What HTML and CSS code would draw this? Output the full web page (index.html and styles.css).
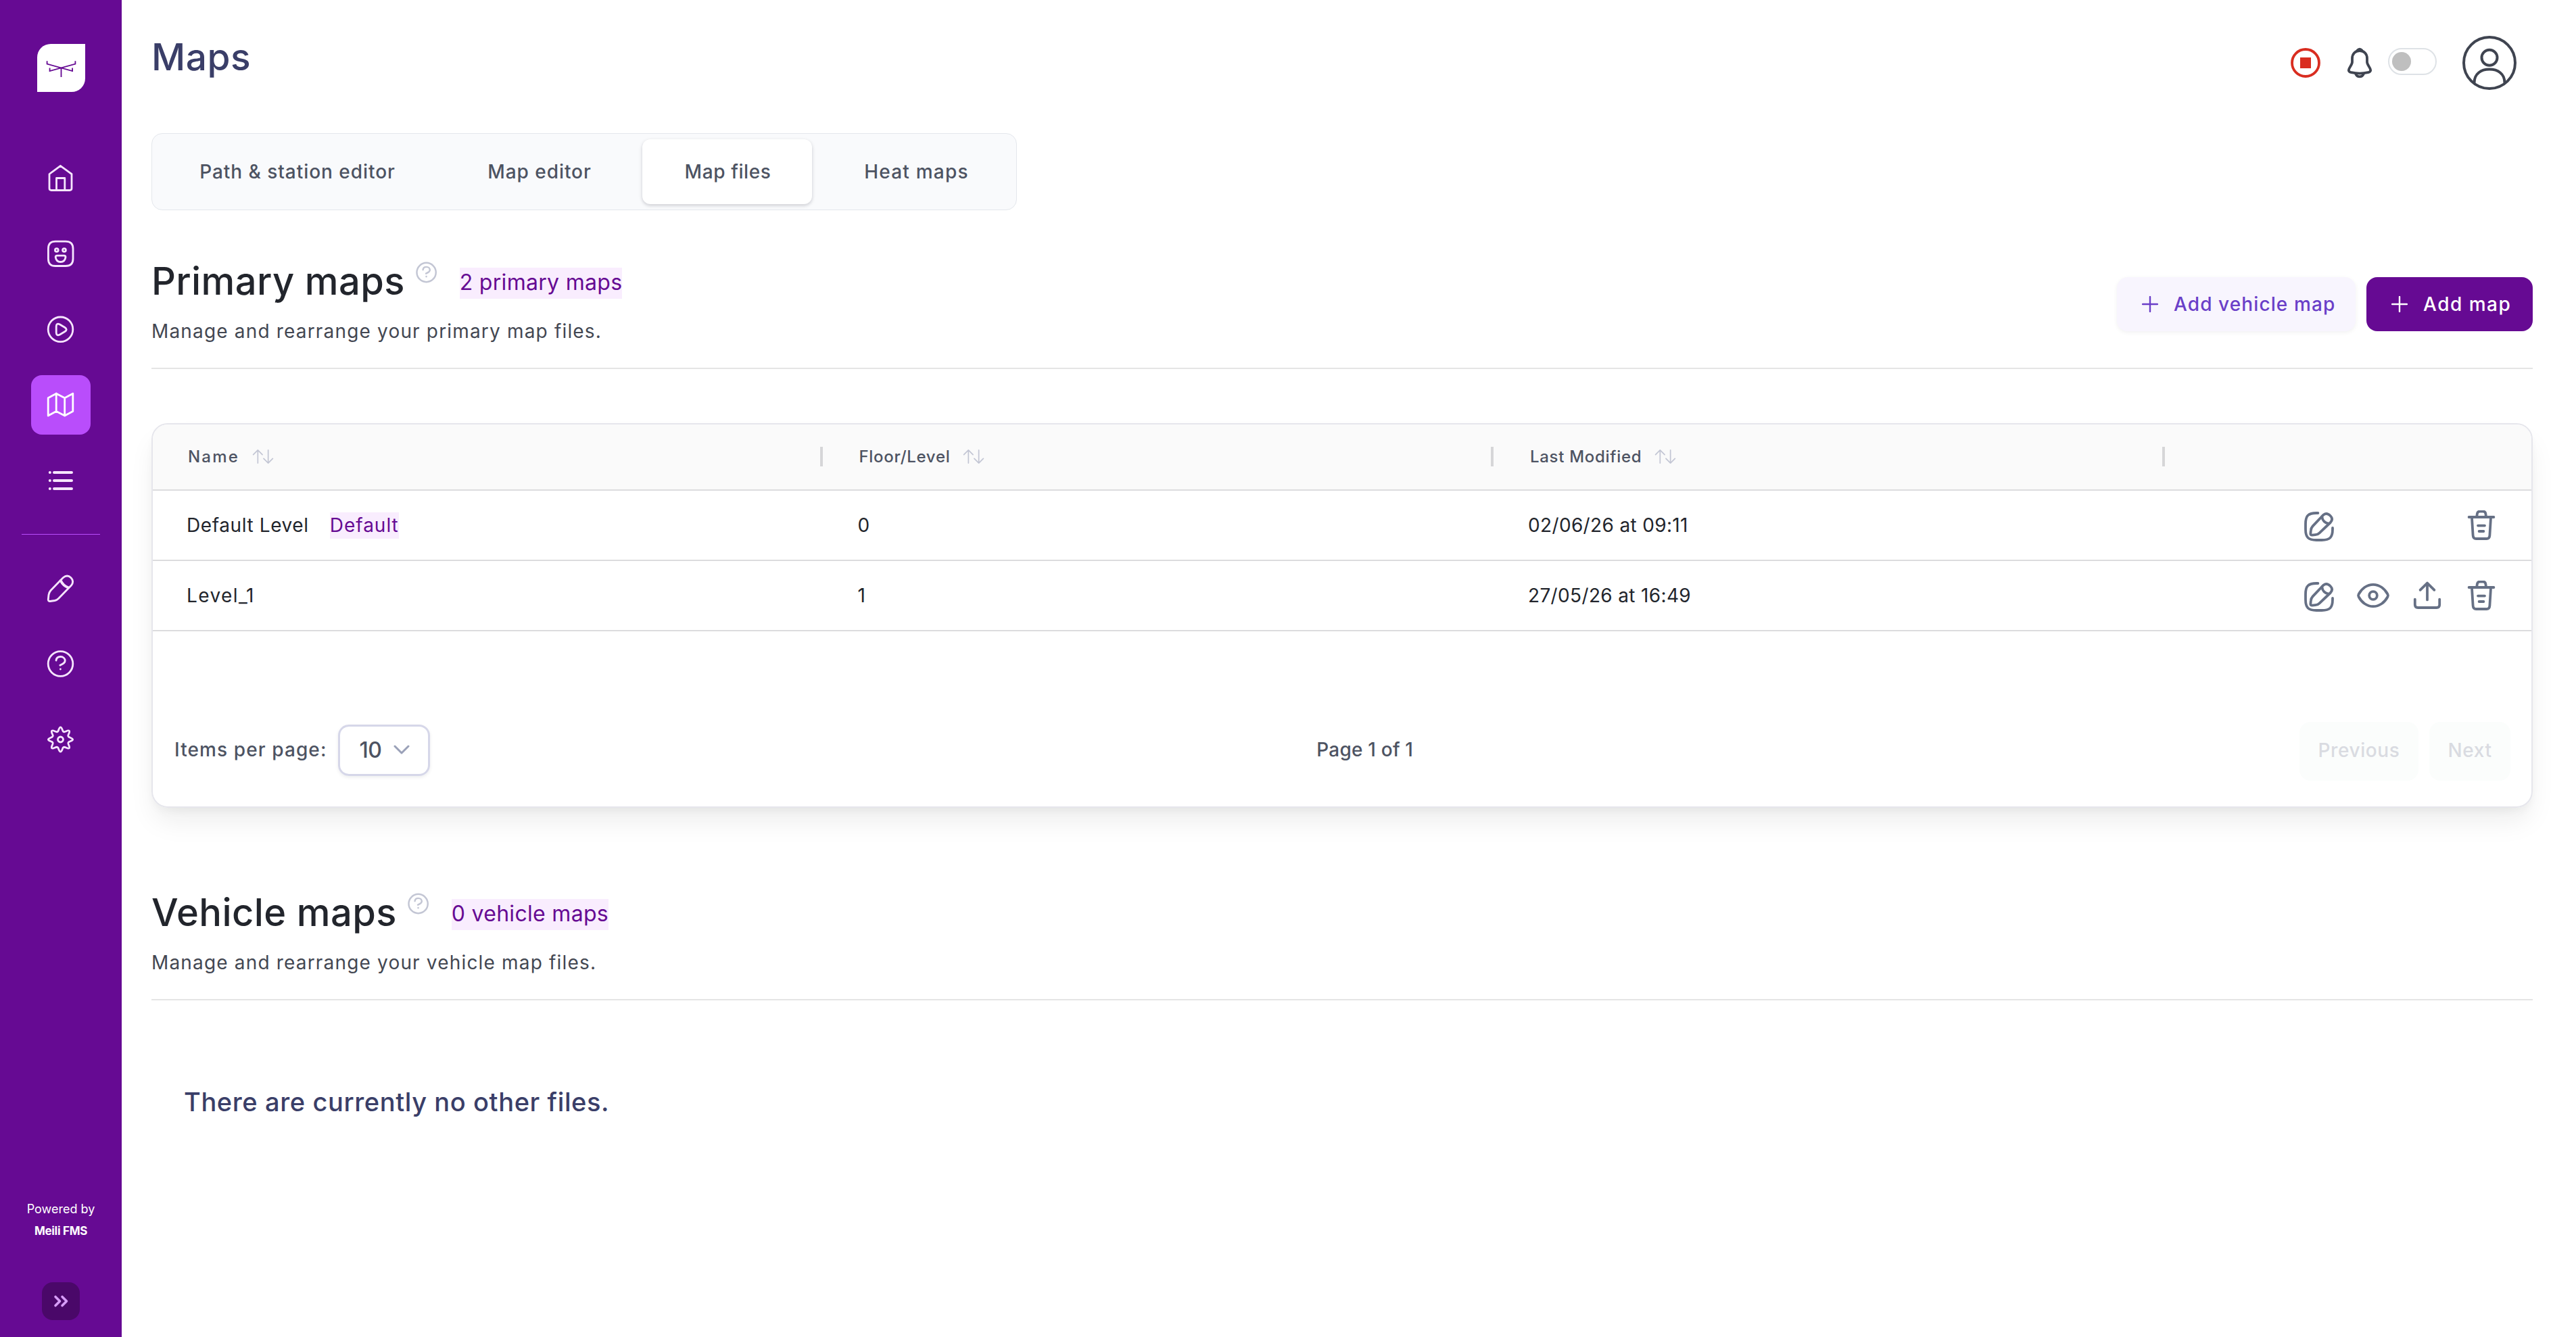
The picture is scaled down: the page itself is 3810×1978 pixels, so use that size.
FILE: index.html
```html
<!DOCTYPE html>
<html lang="en">
<head>
    <meta charset="UTF-8">
    <meta name="viewport" content="width=device-width, initial-scale=1.0">
    <title>Maps</title>
    <link rel="stylesheet" href="styles.css">
</head>
<body>

    <!-- shared icons -->
    <svg class="sprite">
        <symbol id="icon-edit" viewBox="0 0 24 24">
            <path d="M11.2 2H10C4 2 2 4 2 10v4c0 6 2 8 8 8h4c6 0 8-2 8-8v-1"/>
            <path d="M14 4.6L7.3 11.7C6.3 12.8 6 13.6 5.9 15L5.7 17.1C5.6 18 6 18.3 6.9 18.3L9.2 18.1C10.6 18 11.3 17.7 12.2 16.8L20.4 9C22 7.3 21.9 5.6 20.3 4C18.6 2.3 16.9 2 15.4 3.2Z"/>
            <path d="M14.2 4.8C14.4 7.4 16.4 9.5 19 9.8"/>
        </symbol>
        <symbol id="icon-trash" viewBox="0 0 24 24">
            <path d="M2.8 5H21.2M8.6 4.8L8.9 2.6C9.1 1.3 9.7 .8 10.8 .8H13.4C14.6 .8 15 1.3 15.2 2.6L15.5 4.8"/>
            <path d="M5 5.4L5.8 18.4C5.9 20.3 6.6 21 8.2 21H15.8C17.4 21 18.1 20.3 18.2 18.4L19 5.4M9.5 11.3H14.5M10.3 15.5H13.7"/>
        </symbol>
        <symbol id="icon-help" viewBox="0 0 44 44">
            <circle cx="21.5" cy="22" r="18.3"/>
            <path d="M15 17C15.4 13.4 18 11.5 21.5 11.5C25.4 11.5 28.2 14 28.2 17.4C28.2 20.8 25 22 20.8 24.2M21.4 29.9V30"/>
        </symbol>
        <symbol id="icon-sort" viewBox="0 0 32 24">
            <path d="M8 22V2M1 9L8 2L15 9M24 2V22M17 15L24 22L31 15"/>
        </symbol>
        <symbol id="icon-plus" viewBox="0 0 24 24">
            <path d="M12 1V23M1 12H23"/>
        </symbol>
    </svg>

    <div class="layout">
        <aside class="sidebar">
            <div class="logo">
                <svg viewBox="43 46 214 214"><path d="M87 122V135L200 167V153M213 122V135L99 167V153M150 152V194"/></svg>
            </div>

            <nav class="nav">
                <a class="nav-item"><svg viewBox="0 0 44 44"><path d="M5 16.5L21.4 4.3L38 16.5V37.5Q38 40.5 35 40.5H8Q5 40.5 5 37.5ZM15.5 40V22.5H27.8V40"/></svg></a>
                <a class="nav-item"><svg viewBox="0 0 44 44"><path d="M14 4.2H29Q40 4.2 40 15V30Q40 40.5 29 40.5H14Q3.4 40.5 3.4 30V15Q3.4 4.2 14 4.2ZM14.2 27.5Q14.2 25.2 16.5 25.2H26.8Q29 25.2 29 27.5Q28 34.5 21.6 34.5Q15.2 34.5 14.2 27.5Z"/><circle cx="15.8" cy="17" r="2.4"/><circle cx="27" cy="17" r="2.4"/></svg></a>
                <a class="nav-item"><svg viewBox="0 0 44 44"><circle cx="21.5" cy="22.3" r="18.3"/><path d="M15.2 18Q15.2 12.5 20.5 15L28 19.5Q32.5 22.5 28 25.5L20.5 30Q15.2 32.5 15.2 27Z"/></svg></a>
                <a class="nav-item active"><svg viewBox="0 0 44 44"><path d="M3.2 11.7L15.2 5.2L27.7 11.7L39.8 5.2V31.5L27.7 38L15.2 31.5L3.2 38ZM15.2 5.2V31.5M27.7 11.7V38"/></svg></a>
                <a class="nav-item"><svg class="thick" viewBox="0 0 44 44"><path d="M5.8 10H5.9M5.8 22H5.9M5.8 34H5.9M12 10H38M12 22H38M12 34H38"/></svg></a>
                <hr class="nav-divider">
                <a class="nav-item"><svg viewBox="0 0 44 44"><path d="M21.5 10.5L7 25.5Q4.5 28.5 4 32L3.3 38.5Q3 41.5 6 41.5L13 40.5Q16 40 18.5 37.5L34 21.5L37.5 18Q42 12 37 6.8Q31.5 1.5 25.5 6.5Z"/><path class="band" d="M21.8 11Q25.5 18.8 33 21.3"/></svg></a>
                <a class="nav-item"><svg><use href="#icon-help"/></svg></a>
                <a class="nav-item"><svg viewBox="-21.5 -22 44 44"><circle r="4"/><path d="M14.2-2.8Q22 0 14.2 2.8Q9.7 4 12.1 8.1Q15.6 15.6 8.1 12.1Q4 9.7 2.8 14.2Q0 22-2.8 14.2Q-4 9.7-8.1 12.1Q-15.6 15.6-12.1 8.1Q-9.7 4-14.2 2.8Q-22 0-14.2-2.8Q-9.7-4-12.1-8.1Q-15.6-15.6-8.1-12.1Q-4-9.7-2.8-14.2Q0-22 2.8-14.2Q4-9.7 8.1-12.1Q15.6-15.6 12.1-8.1Q9.7-4 14.2-2.8Z"/></svg></a>
            </nav>

            <div class="powered">
                <span>Powered by</span>
                <strong>Meili FMS</strong>
            </div>
            <button class="expand"><svg viewBox="0 0 56 56"><path d="M20 21.5L26.5 28L20 34.5M30 21.5L36.5 28L30 34.5"/></svg></button>
        </aside>

        <main class="main">
            <header class="header">
                <h1>Maps</h1>
                <div class="header-actions">
                    <svg class="stop" viewBox="0 0 44 44"><circle cx="22" cy="22" r="20"/><rect x="14" y="14" width="16" height="16"/></svg>
                    <svg class="bell" viewBox="0 0 24 24">
                        <path d="M12 3C8.7 3 6.5 5.5 6.5 8.7V11.4C6.5 13.6 3.9 15.5 3.9 17.5C3.9 18.5 4.8 18.8 5.8 19.1C9.8 20 14.2 20 18.2 19.1C19.2 18.8 20.1 18.5 20.1 17.5C20.1 15.5 17.5 13.6 17.5 11.4V8.7C17.5 5.5 15.3 3 12 3Z"/>
                        <path d="M10.3 2.8Q12 .9 13.7 2.8M9 20C9.6 21.5 10.6 22.2 12 22.2S14.4 21.5 15 20"/>
                    </svg>
                    <span class="toggle"></span>
                    <svg class="avatar" viewBox="0 0 80 80"><circle cx="40" cy="40" r="38"/><circle cx="40" cy="32.3" r="11.5"/><path d="M17.5 69.5C17.5 56 27.5 49.5 40 49.5S62.5 56 62.5 69.5"/></svg>
                </div>
            </header>

            <div class="tabs">
                <button class="tab tab-path">Path &amp; station editor</button>
                <button class="tab tab-editor">Map editor</button>
                <button class="tab tab-files active">Map files</button>
                <button class="tab tab-heat">Heat maps</button>
            </div>

            <section>
                <div class="section-head primary-head">
                    <div class="section-info">
                        <div class="section-title">
                            <h2>Primary maps</h2>
                            <svg class="help"><use href="#icon-help"/></svg>
                            <span class="badge">2 primary maps</span>
                        </div>
                        <p>Manage and rearrange your primary map files.</p>
                    </div>
                    <div class="section-actions">
                        <button class="btn btn-light"><svg><use href="#icon-plus"/></svg>Add vehicle map</button>
                        <button class="btn btn-primary"><svg><use href="#icon-plus"/></svg>Add map</button>
                    </div>
                </div>

                <div class="card">
                    <div class="row row-head">
                        <div class="cell"><span class="name">Name</span><svg class="sort"><use href="#icon-sort"/></svg></div>
                        <div class="cell"><span>Floor/Level</span><svg class="sort"><use href="#icon-sort"/></svg></div>
                        <div class="cell"><span>Last Modified</span><svg class="sort"><use href="#icon-sort"/></svg></div>
                    </div>
                    <div class="row">
                        <div class="cell">Default Level <span class="tag">Default</span></div>
                        <div class="cell">0</div>
                        <div class="cell date">02/06/26 at 09:11</div>
                        <div class="actions">
                            <svg><use href="#icon-edit"/></svg>
                            <svg class="last"><use href="#icon-trash"/></svg>
                        </div>
                    </div>
                    <div class="row">
                        <div class="cell level">Level_1</div>
                        <div class="cell">1</div>
                        <div class="cell date">27/05/26 at 16:49</div>
                        <div class="actions">
                            <svg><use href="#icon-edit"/></svg>
                            <svg viewBox="0 0 24 24"><path d="M1.3 10C3.5 5.8 7.5 2.9 12 2.9S20.5 5.8 22.7 10C23.1 10.7 23.1 11.3 22.7 12C20.5 16.2 16.5 19.1 12 19.1S3.5 16.2 1.3 12C.9 11.3 .9 10.7 1.3 10Z"/><circle cx="12" cy="11" r="2.9"/></svg>
                            <svg viewBox="0 0 24 24"><path d="M12 14.2V1.8M6.8 6.9L12 1.8L17.2 6.9M2.9 13.8V17.8Q2.9 20 5.1 20H18.9Q21.1 20 21.1 17.8V13.8"/></svg>
                            <svg class="last"><use href="#icon-trash"/></svg>
                        </div>
                    </div>
                    <div class="pagination">
                        <div class="page-size">
                            <span>Items per page:</span>
                            <button class="select">10<svg viewBox="0 0 24 14"><path d="M2 2L12 12L22 2"/></svg></button>
                        </div>
                        <span class="page-info">Page 1 of 1</span>
                        <div class="pager">
                            <button class="pager-prev" disabled>Previous</button>
                            <button class="pager-next" disabled>Next</button>
                        </div>
                    </div>
                </div>
            </section>

            <section>
                <div class="section-head vehicle-head">
                    <div class="section-info">
                        <div class="section-title">
                            <h2>Vehicle maps</h2>
                            <svg class="help"><use href="#icon-help"/></svg>
                            <span class="badge">0 vehicle maps</span>
                        </div>
                        <p>Manage and rearrange your vehicle map files.</p>
                    </div>
                </div>
                <div class="empty">There are currently no other files.</div>
            </section>
        </main>
    </div>

</body>
</html>
```

FILE: styles.css
```css
* {
    box-sizing: border-box;
}

body {
    margin: 0;
    font-family: Inter, sans-serif;
    font-size: 28px;
    color: #22252c;
    background-color: #fff;
}

h1, h2, p {
    margin: 0;
}

button {
    font: inherit;
    letter-spacing: inherit;
    color: inherit;
    border: none;
    padding: 0;
    background: none;
}

svg {
    display: block;
    flex: none;
    fill: none;
    stroke: currentColor;
    stroke-linecap: round;
    stroke-linejoin: round;
}

.sprite {
    display: none;
}

.layout {
    display: flex;
    height: 1978px;
}

/* sidebar */
.sidebar {
    width: 180px;
    flex: none;
    display: flex;
    flex-direction: column;
    align-items: center;
    padding: 65px 0 25px;
    background-color: #660a93;
    color: #f6e5fe;
}

.logo {
    width: 71px;
    height: 71px;
    background-color: #fff;
    border-radius: 20px 0 20px 0;
    color: #660a93;
}

.logo svg {
    stroke-width: 5.5;
    stroke-linecap: butt;
    stroke-linejoin: miter;
}

.nav {
    display: flex;
    flex-direction: column;
    align-items: center;
    gap: 24px;
    margin-top: 83px;
}

.nav-item {
    width: 88px;
    height: 88px;
    display: flex;
    align-items: center;
    justify-content: center;
    border-radius: 16px;
}

.nav-item.active {
    background-color: #b94dfb;
    color: #fff;
}

.nav-item svg {
    width: 44px;
    height: 44px;
    stroke-width: 2.8;
}

.nav-item .thick {
    stroke-width: 4;
}

.nav-item .band {
    stroke-width: 4;
}

.nav-divider {
    width: 116px;
    height: 1px;
    border: none;
    margin: 11px 0;
    background-color: #b94dfb;
}

.powered {
    margin-top: auto;
    display: flex;
    flex-direction: column;
    align-items: center;
    font-size: 18px;
    line-height: 32px;
    color: #fff;
}

.powered strong {
    font-size: 17px;
    letter-spacing: -0.3px;
}

.expand {
    width: 56px;
    height: 56px;
    margin-top: 60px;
    border-radius: 16px;
    background-color: #4a0869;
    color: #d79df8;
}

.expand svg {
    stroke-width: 3.6;
}

/* page header */
.main {
    flex: 1;
    padding: 53px 64px 0 44px;
}

.header {
    display: flex;
    justify-content: space-between;
    height: 144px;
}

.header h1 {
    font-size: 55px;
    line-height: 62px;
    font-weight: 500;
    letter-spacing: 0.5px;
    color: #3a3e68;
}

.header-actions {
    height: 80px;
    display: flex;
    align-items: center;
    padding-right: 24px;
    color: #3f4450;
}

.stop {
    width: 44px;
    height: 44px;
    color: #d92d20;
    stroke-width: 3.8;
}

.stop rect {
    fill: #d92d20;
    stroke: none;
}

.bell {
    width: 48px;
    height: 48px;
    margin-left: 34px;
    stroke-width: 1.9;
}

.toggle {
    width: 72px;
    height: 40px;
    margin: -4px 38px 0 18px;
    padding: 4px;
    border: 2px solid #dee2e6;
    border-radius: 20px;
}

.toggle::before {
    content: "";
    display: block;
    width: 28px;
    height: 28px;
    border-radius: 50%;
    background-color: #bfbfbf;
}

.avatar {
    width: 80px;
    height: 80px;
    stroke-width: 4;
}

/* tabs */
.tabs {
    display: flex;
    gap: 16px;
    width: 1280px;
    height: 114px;
    padding: 8px 9px;
    border: 1px solid #e4e7ec;
    border-radius: 16px;
    background-color: #f9fafc;
}

.tab {
    font-weight: 500;
    letter-spacing: 0.95px;
    line-height: 96px;
    border-radius: 12px;
    color: #4d5362;
}

.tab.active {
    background-color: #fff;
    box-shadow: 0 2px 4px rgba(16, 24, 40, 0.1), 0 2px 6px rgba(16, 24, 40, 0.1);
}

.tab-path {
    width: 410px;
    padding-left: 2px;
}

.tab-editor {
    width: 274px;
    padding-left: 2px;
}

.tab-files {
    width: 251px;
    padding-left: 2px;
    letter-spacing: 0.6px;
}

.tab-heat {
    width: 277px;
    letter-spacing: 1.2px;
}

/* section headings */
.section-head {
    display: flex;
    justify-content: space-between;
    height: 164px;
    border-bottom: 2px solid #e5e5e5;
}

.primary-head {
    margin-top: 71px;
}

.vehicle-head {
    margin-top: 121px;
}

.section-title {
    display: flex;
    height: 68px;
    margin-bottom: 19px;
}

.section-title h2 {
    font-size: 56px;
    line-height: 68px;
    font-weight: 500;
    letter-spacing: 0.4px;
}

.help {
    width: 34px;
    height: 34px;
    margin: 4px 0 0 15px;
    color: #c3c6d4;
    stroke-width: 3.2;
}

.badge {
    height: 46px;
    line-height: 44px;
    margin: 14px 0 0 32px;
    background-color: #f9edfe;
    color: #660a93;
    font-size: 32px;
    letter-spacing: 0.3px;
}

.section-info p {
    line-height: 42px;
    letter-spacing: 1.17px;
    color: #434752;
}

.section-actions {
    display: flex;
    gap: 16px;
    padding-top: 28px;
}

.btn {
    display: flex;
    align-items: center;
    height: 80px;
    padding-left: 37px;
    border-radius: 16px;
    font-weight: 500;
    letter-spacing: 1.1px;
}

.btn svg {
    width: 24px;
    height: 24px;
    margin-right: 23px;
    stroke-width: 2.4;
}

.btn-light {
    width: 353px;
    background-color: #f8f5fe;
    color: #6a3fc8;
    box-shadow: 0 2px 6px rgba(16, 24, 40, 0.06);
}

.btn-primary {
    width: 246px;
    background-color: #660a93;
    color: #fff;
    letter-spacing: 1.5px;
}

/* maps table */
.card {
    margin-top: 80px;
    border: 2px solid #e6e6ec;
    border-radius: 24px;
    overflow: hidden;
    box-shadow: 0 24px 40px -6px rgba(20, 30, 26, 0.08), 0 8px 14px -4px rgba(20, 30, 26, 0.05);
}

.row {
    display: grid;
    grid-template-columns: 992.5px 992.5px 992.5px 1fr;
    height: 104px;
    border-bottom: 2px solid #dcdcde;
}

.row-head {
    height: 98px;
    background-color: #fafafa;
    font-size: 24px;
    font-weight: 500;
    color: #4d5362;
}

.cell {
    display: flex;
    align-items: center;
    padding-left: 50px;
    letter-spacing: 0.6px;
}

.row-head .cell {
    padding-left: 52px;
    padding-right: 2px;
    padding-bottom: 2px;
    letter-spacing: 0.7px;
}

.row-head .name {
    letter-spacing: 2.2px;
}

.row-head .cell::after {
    content: "";
    width: 4px;
    height: 29px;
    margin-left: auto;
    background-color: #d6d6d8;
}

.sort {
    width: 32px;
    height: 23px;
    margin-left: 19px;
    color: #c3c6d4;
    stroke-width: 1.8;
}

.cell.level {
    letter-spacing: 1.4px;
}

.cell.date {
    padding-left: 49px;
    letter-spacing: 0.35px;
}

.tag {
    height: 39px;
    line-height: 39px;
    margin-left: 31px;
    background-color: #f9edfe;
    color: #660a93;
    letter-spacing: 1px;
}

.actions {
    display: grid;
    grid-template-columns: repeat(4, 48px);
    gap: 32px;
    justify-content: end;
    padding: 29px 50px 0 0;
    color: #667085;
}

.actions svg {
    width: 48px;
    height: 48px;
    overflow: visible;
    stroke-width: 1.9;
}

.actions .last {
    grid-column: 4;
}

.pagination {
    display: flex;
    align-items: center;
    justify-content: space-between;
    height: 87px;
    margin: 134px 31px 38px;
    font-weight: 500;
    color: #4d5362;
}

.page-size {
    display: flex;
    align-items: center;
    gap: 17px;
    letter-spacing: 1.1px;
    padding-bottom: 3px;
}

.page-info {
    letter-spacing: 0.2px;
    padding-bottom: 5px;
}

.page-size span {
    padding: 0 0 2px 1px;
}

.select {
    display: flex;
    align-items: center;
    gap: 18px;
    width: 136px;
    height: 76px;
    padding: 0 0 2px 28px;
    border: 3px solid #d6d7e9;
    border-radius: 16px;
    font-size: 32px;
    letter-spacing: -0.5px;
    box-shadow: 0 2px 5px rgba(16, 24, 40, 0.08);
}

.select svg {
    width: 24px;
    height: 14px;
    color: #9aa1b8;
    stroke-width: 3;
}

.pager {
    display: flex;
    gap: 16px;
}

.pager button {
    height: 87px;
    padding-bottom: 4px;
    border-radius: 16px;
    background-color: #fbfdfc;
    color: #d9dbe1;
    letter-spacing: 0.6px;
}

.pager-prev {
    width: 176px;
}

.pager-next {
    width: 120px;
}

.empty {
    margin: 120px 0 0 48px;
    font-size: 38px;
    line-height: 60px;
    font-weight: 500;
    letter-spacing: 0.6px;
    color: #3a3e68;
}
```
